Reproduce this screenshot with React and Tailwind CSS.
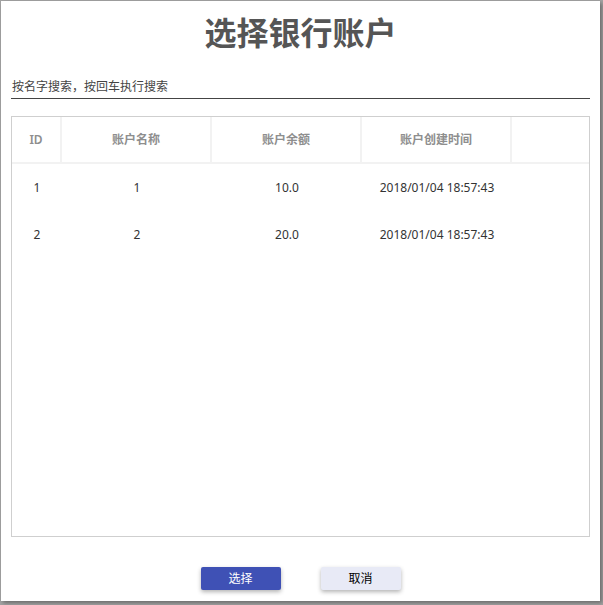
import React from "react";

const rows = [
  { id: 1, name: "1", balance: "10.0", created: "2018/01/04 18:57:43" },
  { id: 2, name: "2", balance: "20.0", created: "2018/01/04 18:57:43" },
];

const headers = ["ID", "账户名称", "账户余额", "账户创建时间", ""];

export default function App() {
  return (
    <div
      className="relative h-[605px] w-[603px] overflow-hidden bg-[#a3a3a3]"
      style={{ fontFamily: '"Noto Sans", "Noto Sans CJK SC", sans-serif' }}
    >
      {/* Dialog */}
      <div className="ml-px mt-px flex h-[600px] w-[599px] flex-col bg-white shadow-[2px_2px_4px_rgba(0,0,0,0.35)]">
        <h1 className="pt-[12px] text-center text-[32px] font-bold leading-[40px] text-[#555]">
          选择银行账户
        </h1>

        {/* Search */}
        <div className="mx-[10px] mt-[22px] flex h-[24px] items-center border-b border-[#444] px-[1px]">
          <input
            className="w-full bg-transparent text-[12px] text-[#333] outline-none placeholder:text-[#444]"
            placeholder="按名字搜索，按回车执行搜索"
          />
        </div>

        {/* Table */}
        <div className="mx-[10px] mt-[17px] h-[421px] border border-[#cfcfcf]">
          <div className="grid h-[47px] grid-cols-[50px_150px_150px_150px_1fr] border-b-2 border-[#f2f2f2]">
            {headers.map((h, i) => (
              <div
                key={i}
                className={
                  "flex items-center justify-center text-[12px] font-semibold text-[#8e8e8e] " +
                  (i < headers.length - 1 ? "border-r-2 border-[#f2f2f2]" : "")
                }
              >
                {h}
              </div>
            ))}
          </div>
          {rows.map((r) => (
            <div
              key={r.id}
              className="grid h-[47px] grid-cols-[50px_150px_150px_150px_1fr] text-[12px] text-[#333]"
            >
              <div className="flex items-center justify-center">{r.id}</div>
              <div className="flex items-center justify-center">{r.name}</div>
              <div className="flex items-center justify-center">{r.balance}</div>
              <div className="flex items-center justify-center">{r.created}</div>
              <div />
            </div>
          ))}
        </div>

        {/* Buttons */}
        <div className="mt-[30px] flex justify-center gap-[40px]">
          <button className="h-[23px] w-[80px] rounded-[2px] bg-[#3f51b5] text-[12px] text-white shadow-[0_2px_4px_rgba(0,0,0,0.3)]">
            选择
          </button>
          <button className="h-[23px] w-[80px] rounded-[2px] bg-[#e8eaf6] text-[12px] text-black shadow-[0_2px_4px_rgba(0,0,0,0.3)]">
            取消
          </button>
        </div>
      </div>
    </div>
  );
}
